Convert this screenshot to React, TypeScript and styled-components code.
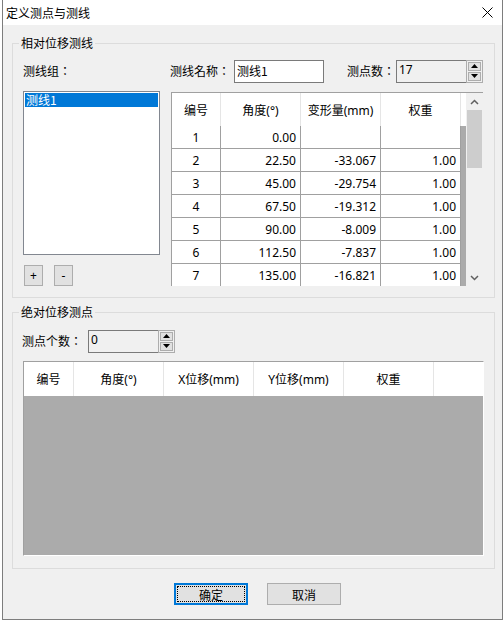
import React from "react";
import styled, { createGlobalStyle } from "styled-components";

const GlobalStyle = createGlobalStyle`
	html, body {
		margin: 0;
		padding: 0;
		background: #ffffff;
	}
	body {
		font-family: "Noto Sans", "Noto Sans CJK SC", sans-serif;
		font-size: 12px;
		color: #000;
	}
`;

const Window = styled.div`
	margin-left: 2px;
	width: 501px;
	height: 620px;
	box-sizing: border-box;
	border: 1px solid #7d7d7d;
	border-top: none;
	display: flex;
	flex-direction: column;
	background: #f0f0f0;
`;

const TitleBar = styled.div`
	height: 25px;
	background: #ffffff;
	display: flex;
	align-items: center;
	justify-content: space-between;
	padding: 0 9px 0 3px;
	font-family: "Noto Sans CJK SC", sans-serif;
	font-size: 12px;
`;

const Body = styled.div`
	flex: 1;
	padding: 18px 7px 0 9px;
	display: flex;
	flex-direction: column;
`;

const Group = styled.div<{ $top?: number; $bottom: number }>`
	position: relative;
	border: 1px solid #dcdcdc;
	margin-top: ${({ $top }) => $top ?? 0}px;
	padding: ${({ $top }) => ($top ? 17 : 16)}px 11px ${({ $bottom }) => $bottom}px 10px;
`;

const GroupTitle = styled.span`
	position: absolute;
	top: -9px;
	left: 6px;
	padding: 0 2px;
	background: #f0f0f0;
	font-family: "Noto Sans CJK SC", sans-serif;
	line-height: 16px;
`;

const Columns = styled.div`
	display: flex;
	gap: 11px;
`;

const LeftColumn = styled.div`
	width: 137px;
	display: flex;
	flex-direction: column;
`;

const RightColumn = styled.div`
	flex: 1;
	display: flex;
	flex-direction: column;
	gap: 10px;
`;

const Label = styled.span<{ $width?: number }>`
	font-family: "Noto Sans CJK TC", "Noto Sans CJK SC", sans-serif;
	white-space: nowrap;
	line-height: 22px;
	${({ $width }) => ($width ? `width: ${$width}px;` : "")}
`;

const LabelRow = styled.div`
	height: 22px;
	display: flex;
	align-items: center;
`;

const FieldRow = styled.div`
	height: 22px;
	display: flex;
	align-items: center;
	margin-left: -1px;
`;

const CountLabel = styled(Label)`
	margin-left: 23px;
`;

const TextBox = styled.div`
	width: 90px;
	height: 23px;
	box-sizing: border-box;
	border: 1px solid #7a7a7a;
	background: #ffffff;
	padding: 0 2px;
	line-height: 20px;
	font-family: "Noto Sans CJK SC", sans-serif;
`;

const Spinner = styled.div<{ $ml?: string }>`
	margin-left: ${({ $ml }) => $ml ?? "0"};
	width: 87px;
	height: 23px;
	display: flex;
`;

const SpinField = styled.div`
	flex: 1;
	box-sizing: border-box;
	border: 1px solid #7a7a7a;
	border-right: none;
	background: #f0f0f0;
	padding: 0 2px;
	line-height: 18px;
`;

const SpinButtons = styled.div`
	width: 17px;
	box-sizing: border-box;
	border: 1px solid #adadad;
	display: flex;
	flex-direction: column;
	gap: 1px;
	padding: 1px;
	background: #f0f0f0;
`;

const SpinButton = styled.div`
	flex: 1;
	border: 1px solid #adadad;
	background: #e1e1e1;
	display: flex;
	align-items: center;
	justify-content: center;
`;

const ListBox = styled.div`
	margin-top: 9px;
	height: 164px;
	box-sizing: border-box;
	border: 1px solid #828790;
	background: #ffffff;
	padding: 1px;
`;

const ListItem = styled.div<{ $selected?: boolean }>`
	height: 14px;
	line-height: 14px;
	padding-left: 1px;
	font-family: "Noto Sans CJK SC", sans-serif;
	background: ${({ $selected }) => ($selected ? "#0078d7" : "transparent")};
	color: ${({ $selected }) => ($selected ? "#ffffff" : "#000")};
`;

const SmallButtons = styled.div`
	margin-top: 10px;
	margin-left: 1px;
	display: flex;
	gap: 11px;
`;

const SmallButton = styled.button`
	width: 19px;
	height: 21px;
	padding: 0;
	border: 1px solid #adadad;
	background: #e1e1e1;
	font-family: "Noto Sans", sans-serif;
	font-size: 12px;
	line-height: 18px;
	color: #000;
`;

const TableFrame = styled.div<{ $height: number }>`
	height: ${({ $height }) => $height}px;
	box-sizing: border-box;
	border-top: 1px solid #a0a0a0;
	border-left: 1px solid #a0a0a0;
	display: flex;
	overflow: hidden;
`;

const GridArea = styled.div`
	flex: 1;
	background: #ababab;
	overflow: hidden;
`;

const HeaderRow = styled.div<{ $cols: string; $height: number }>`
	display: grid;
	grid-template-columns: ${({ $cols }) => $cols};
	height: ${({ $height }) => $height}px;
	background: #ffffff;
`;

const HeaderCell = styled.div`
	border-right: 1px solid #e5e5e5;
	display: flex;
	align-items: center;
	justify-content: center;
	font-family: "Noto Sans", "Noto Sans CJK SC", sans-serif;
	white-space: nowrap;
	&:last-child {
		border-right: none;
	}
`;

const DataRow = styled.div<{ $cols: string }>`
	display: grid;
	grid-template-columns: ${({ $cols }) => $cols};
	height: 23px;
`;

const DataCell = styled.div<{ $align: "center" | "right" }>`
	background: #ffffff;
	border-right: 1px solid #a0a0a0;
	border-bottom: 1px solid #a0a0a0;
	display: flex;
	align-items: center;
	justify-content: ${({ $align }) => ($align === "center" ? "center" : "flex-end")};
	padding-right: ${({ $align }) => ($align === "center" ? 0 : 4)}px;
	font-family: "Noto Sans", sans-serif;
`;

const ScrollBar = styled.div`
	width: 17px;
	background: #f0f0f0;
	display: flex;
	flex-direction: column;
`;

const ScrollArrow = styled.div`
	height: 17px;
	display: flex;
	align-items: center;
	justify-content: center;
`;

const ScrollTrack = styled.div`
	flex: 1;
	padding: 0 1px;
`;

const ScrollThumb = styled.div`
	height: 58px;
	background: #cdcdcd;
`;

const TableFrame2 = styled(TableFrame)`
	border-right: 1px solid #ffffff;
	border-bottom: 1px solid #ffffff;
	margin-top: 9px;
	margin-right: -1px;
`;

const Footer = styled.div`
	display: flex;
	gap: 19px;
	padding-left: 162px;
	margin-top: 14px;
`;

const DialogButton = styled.button<{ $default?: boolean }>`
	position: relative;
	width: 74px;
	height: 22px;
	padding: 0;
	box-sizing: border-box;
	border: ${({ $default }) => ($default ? "2px solid #0078d7" : "1px solid #adadad")};
	background: #e1e1e1;
	font-family: "Noto Sans CJK SC", sans-serif;
	font-size: 12px;
	color: #000;
	&::after {
		content: "";
		display: ${({ $default }) => ($default ? "block" : "none")};
		position: absolute;
		inset: 1px;
		border: 1px dotted #000;
	}
`;

function Chevron({ up }: { up?: boolean }) {
	return (
		<svg width="9" height="6" viewBox="0 0 9 6">
			<polyline
				points={up ? "1,5 4.5,1.5 8,5" : "1,1 4.5,4.5 8,1"}
				fill="none"
				stroke="#606060"
				strokeWidth="1.5"
			/>
		</svg>
	);
}

function Triangle({ up }: { up?: boolean }) {
	return (
		<svg width="7" height="4" viewBox="0 0 7 4">
			<polygon points={up ? "0,4 3.5,0 7,4" : "0,0 3.5,4 7,0"} fill="#000" />
		</svg>
	);
}

function SpinBox({ value, ml }: { value: string; ml?: string }) {
	return (
		<Spinner $ml={ml}>
			<SpinField>{value}</SpinField>
			<SpinButtons>
				<SpinButton>
					<Triangle up />
				</SpinButton>
				<SpinButton>
					<Triangle />
				</SpinButton>
			</SpinButtons>
		</Spinner>
	);
}

const lineCols = "49px 80px 80px 80px 1fr";
const pointCols = "50px 90px 90px 90px 90px 1fr";

const rows = [
	["1", "0.00", "", ""],
	["2", "22.50", "-33.067", "1.00"],
	["3", "45.00", "-29.754", "1.00"],
	["4", "67.50", "-19.312", "1.00"],
	["5", "90.00", "-8.009", "1.00"],
	["6", "112.50", "-7.837", "1.00"],
	["7", "135.00", "-16.821", "1.00"],
];

export default function App() {
	return (
		<>
			<GlobalStyle />
			<Window>
				<TitleBar>
					<span>定义测点与测线</span>
					<svg width="11" height="11" viewBox="0 0 11 11">
						<path d="M0.5 0.5L10.5 10.5M10.5 0.5L0.5 10.5" stroke="#000" strokeWidth="1" />
					</svg>
				</TitleBar>
				<Body>
					<Group $bottom={11}>
						<GroupTitle>相对位移测线</GroupTitle>
						<Columns>
							<LeftColumn>
								<LabelRow>
									<Label>测线组：</Label>
								</LabelRow>
								<ListBox>
									<ListItem $selected>测线1</ListItem>
								</ListBox>
								<SmallButtons>
									<SmallButton>+</SmallButton>
									<SmallButton>-</SmallButton>
								</SmallButtons>
							</LeftColumn>
							<RightColumn>
								<FieldRow>
									<Label $width={64}>测线名称：</Label>
									<TextBox>测线1</TextBox>
									<CountLabel>测点数：</CountLabel>
									<SpinBox value="17" ml="auto" />
								</FieldRow>
								<TableFrame $height={194}>
									<GridArea>
										<HeaderRow $cols={lineCols} $height={33}>
											<HeaderCell>编号</HeaderCell>
											<HeaderCell>角度(°)</HeaderCell>
											<HeaderCell>变形量(mm)</HeaderCell>
											<HeaderCell>权重</HeaderCell>
											<HeaderCell />
										</HeaderRow>
										{rows.map((r) => (
											<DataRow key={r[0]} $cols={lineCols}>
												<DataCell $align="center">{r[0]}</DataCell>
												<DataCell $align="right">{r[1]}</DataCell>
												<DataCell $align="right">{r[2]}</DataCell>
												<DataCell $align="right">{r[3]}</DataCell>
											</DataRow>
										))}
									</GridArea>
									<ScrollBar>
										<ScrollArrow>
											<Chevron up />
										</ScrollArrow>
										<ScrollTrack>
											<ScrollThumb />
										</ScrollTrack>
										<ScrollArrow>
											<Chevron />
										</ScrollArrow>
									</ScrollBar>
								</TableFrame>
							</RightColumn>
						</Columns>
					</Group>
					<Group $top={14} $bottom={12}>
						<GroupTitle>绝对位移测点</GroupTitle>
						<FieldRow>
							<Label $width={66}>测点个数：</Label>
							<SpinBox value="0" />
						</FieldRow>
						<TableFrame2 $height={195}>
							<GridArea>
								<HeaderRow $cols={pointCols} $height={34}>
									<HeaderCell>编号</HeaderCell>
									<HeaderCell>角度(°)</HeaderCell>
									<HeaderCell>X位移(mm)</HeaderCell>
									<HeaderCell>Y位移(mm)</HeaderCell>
									<HeaderCell>权重</HeaderCell>
									<HeaderCell />
								</HeaderRow>
							</GridArea>
						</TableFrame2>
					</Group>
					<Footer>
						<DialogButton $default>确定</DialogButton>
						<DialogButton>取消</DialogButton>
					</Footer>
				</Body>
			</Window>
		</>
	);
}
